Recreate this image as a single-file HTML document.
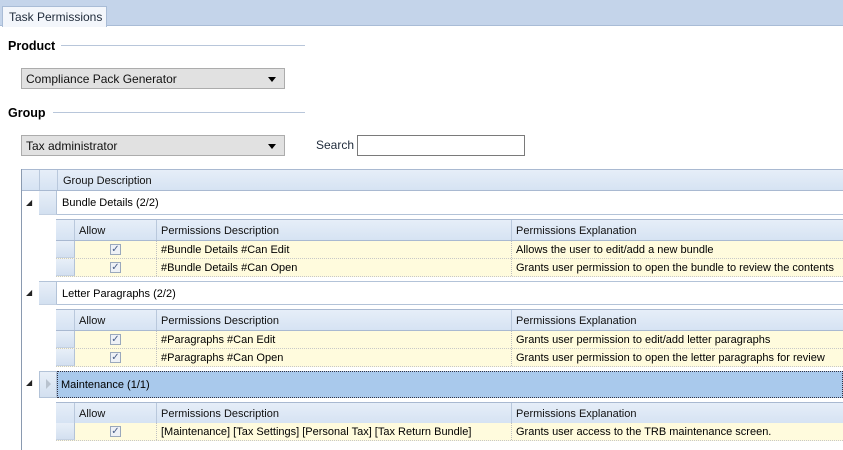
<!DOCTYPE html>
<html><head><meta charset="utf-8"><style>
*{box-sizing:border-box;margin:0;padding:0}
body{width:843px;height:450px;overflow:hidden;background:#fff;font-family:"Liberation Sans",sans-serif;font-size:11px;color:#000;position:relative}
.a{position:absolute}
.tabbar{left:0;top:0;width:843px;height:26px;background:#c4d4ea;border-bottom:1px solid #a9bcd6}
.tab{left:2px;top:6px;width:105px;height:21px;background:#f3f6fb;border:1px solid #a9bcd6;border-bottom:none;font-size:12px;color:#1e2a3a;padding:3px 0 0 6px}
.lbl{font-weight:bold;font-size:12.5px}
.hr{height:1px;background:#b8c6da}
.combo{background:#e1e1e1;border:1px solid #acacac;font-size:12px;padding:3px 0 0 4px;color:#111}
.combo:after{content:"";position:absolute;right:8px;top:8px;border-left:4px solid transparent;border-right:4px solid transparent;border-top:5px solid #000}
.hdr{background:linear-gradient(#e6eef8,#d6e3f3);border-top:1px solid #a9b9d1;border-bottom:1px solid #a9b9d1;color:#111}
.hdr .cell{padding-top:5px}
.cell{position:absolute;top:0;bottom:0;padding:3px 0 0 4px;white-space:nowrap}
.ind{background:linear-gradient(#e8eff8,#d3e0f0);border-right:1px solid #b3c3d8;border-bottom:1px solid #c4d1e2}
.yrow{background:#fffbdd;border-bottom:1px dotted #c8c8c8}
.yrow .cell{padding-top:3px}
.chk{position:absolute;left:35px;top:3px;width:11px;height:11px;border:1px solid #9aa8bc;background:#eef1f6;color:#4a5f88;font-size:10px;line-height:9px;text-align:center;padding:0}
.sep{border-left:1px dotted #c0c0c0}
.hsep{border-left:1px solid #b9c8dc}
</style></head><body>
<div class="a tabbar"></div>
<div class="a tab">Task Permissions</div>

<div class="a lbl" style="left:8px;top:39px">Product</div>
<div class="a hr" style="left:61px;top:45px;width:244px"></div>
<div class="a combo" style="left:21px;top:68px;width:264px;height:21px">Compliance Pack Generator</div>

<div class="a lbl" style="left:8px;top:106px">Group</div>
<div class="a hr" style="left:53px;top:112px;width:252px"></div>
<div class="a combo" style="left:21px;top:135px;width:264px;height:21px">Tax administrator</div>

<div class="a" style="left:316px;top:138px;font-size:12px;color:#1e2a3a">Search</div>
<div class="a" style="left:357px;top:135px;width:168px;height:21px;border:1px solid #7a7a7a;background:#fff"></div>

<div class="a" style="left:21px;top:169px;width:1px;height:281px;background:#8a9ab0"></div>

<div class="a hdr" style="left:22px;top:169px;width:821px;height:22px">
 <div class="cell hsep" style="left:35px;padding-left:5px">Group Description</div>
 <div class="cell hsep" style="left:17px;width:0"></div>
</div>

<div class="a" style="left:26px;top:198px;font-size:8px;color:#222">&#9698;</div>
<div class="a ind" style="left:39px;top:191px;width:18px;height:24px"></div>
<div class="a" style="left:57px;top:191px;width:786px;height:24px;border-bottom:1px solid #b3c3d8;padding:6px 0 0 5px">Bundle Details (2/2)</div>

<div class="a hdr" style="left:56px;top:219px;width:787px;height:22px">
 <div class="cell" style="left:0;width:19px;border-right:1px solid #b9c8dc"></div>
 <div class="cell" style="left:19px">Allow</div>
 <div class="cell hsep" style="left:100px">Permissions Description</div>
 <div class="cell hsep" style="left:455px">Permissions Explanation</div>
</div>
<div class="a yrow" style="left:56px;top:241px;width:787px;height:18px">
 <div class="cell ind" style="left:0;width:19px"></div>
 <div class="cell" style="left:19px;width:81px"><div class="chk">✓</div></div>
 <div class="cell sep" style="left:100px">#Bundle Details #Can Edit</div>
 <div class="cell sep" style="left:455px">Allows the user to edit/add a new bundle</div>
</div>
<div class="a yrow" style="left:56px;top:259px;width:787px;height:18px">
 <div class="cell ind" style="left:0;width:19px"></div>
 <div class="cell" style="left:19px;width:81px"><div class="chk">✓</div></div>
 <div class="cell sep" style="left:100px">#Bundle Details #Can Open</div>
 <div class="cell sep" style="left:455px">Grants user permission to open the bundle to review the contents</div>
</div>

<div class="a" style="left:26px;top:288px;font-size:8px;color:#222">&#9698;</div>
<div class="a ind" style="left:39px;top:281px;width:18px;height:24px;border-top:1px solid #b3c3d8"></div>
<div class="a" style="left:57px;top:281px;width:786px;height:24px;border-top:1px solid #b3c3d8;border-bottom:1px solid #b3c3d8;padding:6px 0 0 5px">Letter Paragraphs (2/2)</div>

<div class="a hdr" style="left:56px;top:309px;width:787px;height:22px">
 <div class="cell" style="left:0;width:19px;border-right:1px solid #b9c8dc"></div>
 <div class="cell" style="left:19px">Allow</div>
 <div class="cell hsep" style="left:100px">Permissions Description</div>
 <div class="cell hsep" style="left:455px">Permissions Explanation</div>
</div>
<div class="a yrow" style="left:56px;top:331px;width:787px;height:18px">
 <div class="cell ind" style="left:0;width:19px"></div>
 <div class="cell" style="left:19px;width:81px"><div class="chk">✓</div></div>
 <div class="cell sep" style="left:100px">#Paragraphs #Can Edit</div>
 <div class="cell sep" style="left:455px">Grants user permission to edit/add letter paragraphs</div>
</div>
<div class="a yrow" style="left:56px;top:349px;width:787px;height:18px">
 <div class="cell ind" style="left:0;width:19px"></div>
 <div class="cell" style="left:19px;width:81px"><div class="chk">✓</div></div>
 <div class="cell sep" style="left:100px">#Paragraphs #Can Open</div>
 <div class="cell sep" style="left:455px">Grants user permission to open the letter paragraphs for review</div>
</div>

<div class="a" style="left:26px;top:378px;font-size:8px;color:#222">&#9698;</div>
<div class="a ind" style="left:39px;top:371px;width:18px;height:27px;border:1px solid #b3c3d8"></div>
<div class="a" style="left:46px;top:379px;width:0;height:0;border-top:5px solid transparent;border-bottom:5px solid transparent;border-left:5px solid #b8c2ce"></div>
<div class="a" style="left:57px;top:371px;width:786px;height:27px;background:#a9c9ec;border:1px dotted #334;padding:7px 0 0 3px">Maintenance (1/1)</div>

<div class="a hdr" style="left:56px;top:402px;width:787px;height:22px">
 <div class="cell" style="left:0;width:19px;border-right:1px solid #b9c8dc"></div>
 <div class="cell" style="left:19px">Allow</div>
 <div class="cell hsep" style="left:100px">Permissions Description</div>
 <div class="cell hsep" style="left:455px">Permissions Explanation</div>
</div>
<div class="a yrow" style="left:56px;top:423px;width:787px;height:18px">
 <div class="cell ind" style="left:0;width:19px"></div>
 <div class="cell" style="left:19px;width:81px"><div class="chk">✓</div></div>
 <div class="cell sep" style="left:100px">[Maintenance] [Tax Settings] [Personal Tax] [Tax Return Bundle]</div>
 <div class="cell sep" style="left:455px">Grants user access to the TRB maintenance screen.</div>
</div>
</body></html>
